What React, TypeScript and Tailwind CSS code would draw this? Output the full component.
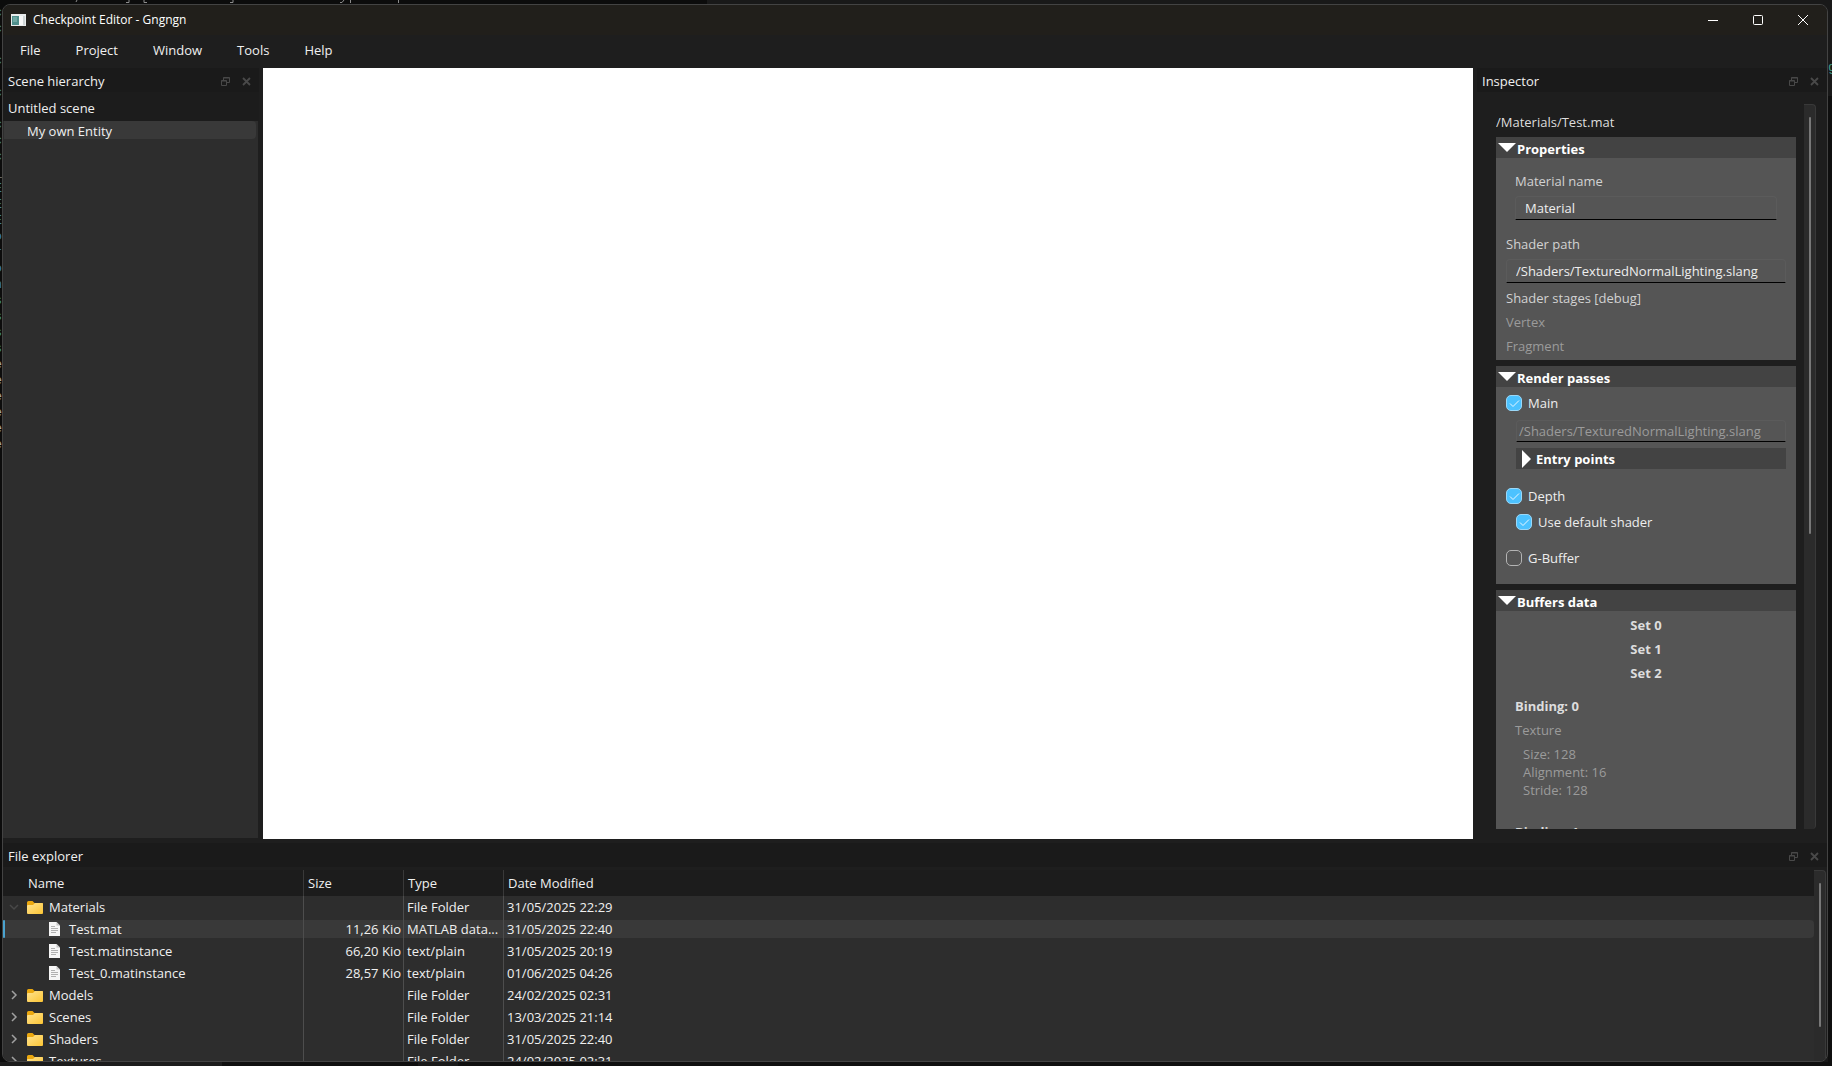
import React from "react";

const gutter = [
  { c: "text-[#3f7f95]", t: "c" },
  { c: "text-[#3f7f95]", t: "c" },
  { c: "", t: "" },
  { c: "text-[#3f7f95]", t: "c" },
  { c: "", t: "" },
  { c: "text-[#3f7f95]", t: "c" },
  { c: "", t: "" },
  { c: "text-[#3f7f95]", t: "c" },
  { c: "text-[#3f7f95]", t: "c" },
  { c: "text-[#3f7f95]", t: "c" },
  { c: "text-[#a9a9a9]", t: "_" },
  { c: "text-[#3f7f95]", t: "E" },
  { c: "text-[#3f7f95]", t: "E" },
  { c: "text-[#3f7f95]", t: "E" },
  { c: "text-[#3a78b5]", t: "o" },
  { c: "text-[#3a78b5]", t: "r" },
  { c: "text-[#3a78b5]", t: "o" },
  { c: "text-[#3a78b5]", t: "n" },
  { c: "text-[#3c8f8f]", t: "s" },
  { c: "text-[#3c8f8f]", t: "s" },
  { c: "text-[#3c8f8f]", t: "s" },
  { c: "text-[#3c8f8f]", t: "s" },
  { c: "text-[#a9a9a9]", t: "e" },
  { c: "text-[#a9a9a9]", t: "e" },
  { c: "text-[#a9a9a9]", t: "e" },
  { c: "text-[#a9a9a9]", t: "e" },
  { c: "text-[#a9a9a9]", t: "e" },
  { c: "text-[#a9a9a9]", t: "e" },
];

/* Slivers of the code editor that stays open underneath the window. */
function Backdrop() {
  return (
    <div aria-hidden="true" className="pointer-events-none absolute inset-0 overflow-hidden font-['Liberation_Mono',monospace] text-[13px] leading-4">
      <div className="absolute top-0 left-0 h-1 w-full">
        <svg width="420" height="4" viewBox="0 0 420 4" fill="none" stroke="#8c8c8c">
          <path d="M77 0l-1 2M126 2.500h3V0M144 0v2.500h3M230 2.500h3V0M340 2.500h2l2-2.500M350.500 0v3M398.500 0v3" />
        </svg>
      </div>
      <div className="absolute top-0 right-0 h-full w-[1125px] bg-[#191919]" />
      <div className="absolute top-[5px] left-0 w-[2px]">
        {gutter.map((g, i) => (
          <div key={i} className="flex h-4 w-[2px] justify-end overflow-hidden">
            <span className={g.c}>{g.t}</span>
          </div>
        ))}
      </div>
      <div className="absolute top-[60px] right-0 w-1 overflow-hidden text-[#3f9a86]">g</div>
      <div className="absolute right-0 bottom-0 left-0 flex h-1 bg-[#0f0f0f]">
        <div className="w-[222px] bg-[#1c1c1c]" />
        <div className="w-[196px]" />
        <div className="w-10 bg-[#191919]" />
      </div>
      <div className="absolute top-24 right-0 bottom-0 w-1 bg-[#0f0f0f]" />
    </div>
  );
}

function AppIcon() {
  return (
    <svg width="15" height="12" viewBox="0 0 15 12" aria-hidden="true">
      <rect width="15" height="12" fill="#e8ecec" />
      <rect x="1" y="2" width="7" height="9" fill="#4f8f8c" />
      <rect x="2" y="3" width="4" height="5" fill="#6fa9a3" />
      <rect x="8" y="2" width="4" height="9" fill="#f7f8f8" />
      <rect x="12" y="2" width="2" height="9" fill="#cfd6d6" />
    </svg>
  );
}

function DockTitle({ id, title }: { id: string; title: string }) {
  return (
    <div className="flex h-6 shrink-0 items-center gap-3 bg-[#1a1a1a] pt-[2px] pr-2 pl-[5px]">
      <h2 id={id} className="flex-1">{title}</h2>
      <button type="button" aria-label={"Float " + title} className="flex size-[9px] items-center justify-center">
        <svg width="9" height="9" viewBox="0 0 9 9" fill="none" stroke="#494949" aria-hidden="true">
          <path d="M0.5 3.5h5v5h-5zM0.5 4h5M2.5 3V0.5h6v5H6M2.5 1h6" />
        </svg>
      </button>
      <button type="button" aria-label={"Close " + title} className="flex size-[9px] items-center justify-center">
        <svg width="9" height="9" viewBox="0 0 9 9" fill="none" stroke="#494949" strokeWidth="1.8" aria-hidden="true">
          <path d="M1 1l7 7M8 1l-7 7" />
        </svg>
      </button>
    </div>
  );
}

function Section({ title, className, children }: { title: string; className: string; children: React.ReactNode }) {
  return (
    <section className="shrink-0 bg-[#555555]">
      <button type="button" aria-expanded="true" className="flex h-[21px] w-full items-center gap-px bg-[#434343] pl-[2px] font-bold text-white">
        <svg width="18" height="9" viewBox="0 0 18 9" fill="#fff" aria-hidden="true">
          <path d="M0 0h18L9 9z" />
        </svg>
        <span className="pt-[2px]">{title}</span>
      </button>
      <div className={className}>{children}</div>
    </section>
  );
}

function Check({ label, checked }: { label: string; checked?: boolean }) {
  return (
    <label className="flex h-[18px] w-fit items-center gap-[6px] text-[#eeeeee]">
      <span className="grid size-4">
        <input
          type="checkbox"
          defaultChecked={checked}
          className="peer col-start-1 row-start-1 size-4 appearance-none rounded-[5px] border border-[#b4b4b4] checked:border-[#9bd8f8] checked:bg-[#4cc2ff]"
        />
        <svg viewBox="0 0 16 16" fill="none" stroke="#e8f7ff" className="pointer-events-none invisible col-start-1 row-start-1 size-4 peer-checked:visible" aria-hidden="true">
          <path d="M4 8.5l3 3 6-6" />
        </svg>
      </span>
      {label}
    </label>
  );
}

function Folder() {
  return (
    <svg width="16" height="13" viewBox="0 0 16 13" className="shrink-0" aria-hidden="true">
      <defs>
        <linearGradient id="folder" x1="0" y1="0" x2="1" y2="1">
          <stop offset="0" stopColor="#ffe391" />
          <stop offset="1" stopColor="#fcc534" />
        </linearGradient>
      </defs>
      <path d="M0 1.5Q0 0 1.500 0h4l2 2H15q1 0 1 1v4H0z" fill="#eba80f" />
      <path d="M0 5q0-1 1-1h5l2-2h7q1 0 1 1V12q0 1-1 1H1q-1 0-1-1z" fill="url(#folder)" />
    </svg>
  );
}

function Page() {
  return (
    <svg width="11" height="14" viewBox="0 0 11 14" className="shrink-0" aria-hidden="true">
      <path d="M0 0h7.500L11 3.500V14H0z" fill="#f5f5f5" />
      <path d="M7.500 0v3.500H11z" fill="#c4c4c4" />
      <path d="M2 4.500h4M2 6.500h7M2 8.500h7M2 10.500h5" stroke="#b0b0b0" />
    </svg>
  );
}

type Row = { name: string; kind: "open" | "folder" | "file"; size?: string; type: string; date: string };

const rows: Row[] = [
  { name: "Materials", kind: "open", type: "File Folder", date: "31/05/2025 22:29" },
  { name: "Test.mat", kind: "file", size: "11,26 Kio", type: "MATLAB data...", date: "31/05/2025 22:40" },
  { name: "Test.matinstance", kind: "file", size: "66,20 Kio", type: "text/plain", date: "31/05/2025 20:19" },
  { name: "Test_0.matinstance", kind: "file", size: "28,57 Kio", type: "text/plain", date: "01/06/2025 04:26" },
  { name: "Models", kind: "folder", type: "File Folder", date: "24/02/2025 02:31" },
  { name: "Scenes", kind: "folder", type: "File Folder", date: "13/03/2025 21:14" },
  { name: "Shaders", kind: "folder", type: "File Folder", date: "31/05/2025 22:40" },
  { name: "Textures", kind: "folder", type: "File Folder", date: "24/02/2025 02:31" },
];

function FileRow({ row, selected }: { row: Row; selected: boolean }) {
  const bg = selected ? "bg-[#393939]" : "";
  return (
    <tr className="h-[22px]" aria-selected={selected}>
      <td className="border-r border-[#4d4d4d] p-0">
        <div className={"flex h-[18px] items-center " + bg}>
          <span className={selected ? "h-[18px] w-[2px] rounded bg-[#4aa3cf]" : "w-[2px]"} />
          {row.kind === "file" ? (
            <span className="flex items-center gap-[9px] pl-11"><Page />{row.name}</span>
          ) : (
            <span className="flex items-center gap-[6px] pl-[3px]">
              <svg width="12" height="12" viewBox="0 0 12 12" fill="none" strokeWidth="1.5" stroke={row.kind === "open" ? "#484848" : "#a0a0a0"} className="mr-px" aria-hidden="true">
                <path d={row.kind === "open" ? "M2 4l4 4 4-4" : "M4 2l4 4-4 4"} />
              </svg>
              <Folder />{row.name}
            </span>
          )}
        </div>
      </td>
      <td className="border-r border-[#4d4d4d] p-0 text-right"><div className={"h-[18px] pr-[2px] " + bg}>{row.size}</div></td>
      <td className="border-r border-[#4d4d4d] p-0"><div className={"h-[18px] pl-[3px] " + bg}>{row.type}</div></td>
      <td className="p-0"><div className={"h-[18px] rounded-r pl-[3px] " + bg}>{row.date}</div></td>
    </tr>
  );
}

export default function App() {
  return (
    <div className="relative isolate flex h-screen flex-col overflow-hidden bg-[#0c0c0c] pt-1 pr-1 pb-1 pl-[2px] font-['Open_Sans',sans-serif] text-[13px] leading-[18px] text-[#f0f0f0]">
      <Backdrop />
      <div className="z-10 flex min-h-0 flex-1 flex-col overflow-hidden rounded-lg border border-[#434343] bg-[#1e1e1e]">
        <header className="flex h-[30px] shrink-0 items-center bg-[#211f1b] pr-px pb-px pl-2 text-[12px] text-white">
          <AppIcon />
          <h1 className="flex-1 pl-[7px]">Checkpoint Editor - Gngngn</h1>
          <button type="button" aria-label="Minimize" className="flex h-full w-[45px] items-center justify-center">
            <svg width="10" height="10" viewBox="0 0 10 10" stroke="#fff" aria-hidden="true"><path d="M0 5.500h10" /></svg>
          </button>
          <button type="button" aria-label="Maximize" className="flex h-full w-[45px] items-center justify-center">
            <svg width="10" height="10" viewBox="0 0 10 10" fill="none" stroke="#fff" aria-hidden="true"><rect x="0.5" y="0.5" width="9" height="9" rx="1" /></svg>
          </button>
          <button type="button" aria-label="Close" className="flex h-full w-[46px] items-center justify-center">
            <svg width="10" height="10" viewBox="0 0 10 10" stroke="#fff" aria-hidden="true"><path d="M0 0l10 10M10 0L0 10" /></svg>
          </button>
        </header>
        <nav className="flex h-[33px] shrink-0 items-center gap-[35px] pb-[3px] pl-[17px]">
          <button type="button">File</button>
          <button type="button">Project</button>
          <button type="button">Window</button>
          <button type="button">Tools</button>
          <button type="button">Help</button>
        </nav>

        <main className="flex min-h-0 flex-1 gap-1">
          <aside aria-labelledby="hierarchy" className="flex w-64 shrink-0 flex-col">
            <DockTitle id="hierarchy" title="Scene hierarchy" />
            <div className="flex h-[29px] shrink-0 items-center bg-[#1c1c1c] pt-[2px] pl-[5px]">Untitled scene</div>
            <ul className="mr-px flex-1 bg-[#2d2d2d] pr-[2px] pl-px">
              <li className="h-[18px] rounded-r bg-[#393939] pl-[23px]"><span className="block pt-px">My own Entity</span></li>
            </ul>
            <div className="h-px" />
          </aside>
          <div className="flex-1 bg-white" />
          <aside aria-labelledby="inspector" className="flex w-[350px] shrink-0 flex-col">
            <DockTitle id="inspector" title="Inspector" />
            <div className="mt-3 mr-[11px] mb-[10px] ml-[19px] flex min-h-0 flex-1 justify-between">
              <div className="flex w-[300px] flex-col gap-[6px] overflow-hidden">
                <p className="-mb-[2px] shrink-0 pt-[9px] pb-[2px] text-[#dddddd]">/Materials/Test.mat</p>
                <Section title="Properties" className="flex flex-col px-[10px] pt-[14px] pb-[5px] text-[#d2d2d2]">
                  <div className="flex flex-col gap-[6px] px-[9px]">
                    <label htmlFor="material">Material name</label>
                    <input id="material" defaultValue="Material" className="h-6 rounded-t border border-[#5b5b5b] border-b-black px-[9px] text-[#eeeeee]" />
                  </div>
                  <label htmlFor="shader" className="mt-[15px]">Shader path</label>
                  <input id="shader" defaultValue="/Shaders/TexturedNormalLighting.slang" className="mt-[6px] h-6 rounded-t border border-[#5b5b5b] border-b-black px-[9px] text-[#eeeeee]" />
                  <p className="mt-[6px]">Shader stages [debug]</p>
                  <p className="mt-[6px] text-[#9b9b9b]">Vertex</p>
                  <p className="mt-[6px] text-[#9b9b9b]">Fragment</p>
                </Section>
                <Section title="Render passes" className="flex flex-col px-[10px] pt-[7px] pb-[17px]">
                  <Check label="Main" checked />
                  <div className="mt-2 flex flex-col gap-[6px] pl-[10px]">
                    <input aria-label="Main pass shader" disabled defaultValue="/Shaders/TexturedNormalLighting.slang" className="h-[22px] rounded-t border border-[#5b5b5b] border-b-black px-[2px] text-[#9b9b9b]" />
                    <button type="button" aria-expanded="false" className="flex h-[21px] items-center gap-[5px] bg-[#434343] pl-[6px] font-bold text-white">
                      <svg width="9" height="18" viewBox="0 0 9 18" fill="#fff" aria-hidden="true"><path d="M0 0v18l9-9z" /></svg>
                      Entry points
                    </button>
                  </div>
                  <div className="mt-[18px]"><Check label="Depth" checked /></div>
                  <div className="mt-2 pl-[10px]"><Check label="Use default shader" checked /></div>
                  <div className="mt-[18px]"><Check label="G-Buffer" /></div>
                </Section>
                <Section title="Buffers data" className="px-[19px] pt-[5px] pb-3 text-[#9b9b9b]">
                  <div className="flex flex-col items-center gap-[6px] font-bold text-[#dddddd]">
                    <p>Set 0</p>
                    <p>Set 1</p>
                    <p>Set 2</p>
                  </div>
                  <h3 className="mt-[15px] font-bold text-[#dddddd]">Binding: 0</h3>
                  <p className="my-[6px]">Texture</p>
                  <div className="pl-2">
                    <p>Size: 128</p>
                    <p>Alignment: 16</p>
                    <p>Stride: 128</p>
                  </div>
                  <h3 className="mt-6 font-bold text-[#dddddd]">Binding: 1</h3>
                </Section>
              </div>
              <div className="flex w-3 justify-center rounded-r border-t border-r border-[#393939] bg-[#2b2b2b] pt-3">
                <div className="h-[417px] w-[2px] rounded bg-[#787878]" />
              </div>
            </div>
          </aside>
        </main>

        <section aria-labelledby="explorer" className="flex h-[222px] shrink-0 flex-col pt-1">
          <DockTitle id="explorer" title="File explorer" />
          <div className="mt-[3px] flex min-h-0 flex-1">
            <div className="flex-1 overflow-hidden bg-[#2d2d2d]">
              <table className="w-full table-fixed border-separate border-spacing-0 bg-[#2d2d2d]">
                <colgroup>
                  <col className="w-[301px]" />
                  <col className="w-[100px]" />
                  <col className="w-[100px]" />
                  <col />
                </colgroup>
                <thead>
                  <tr className="h-[26px] bg-[#1c1c1c] text-left">
                    <th className="border-r border-[#393939] p-0 pl-[25px] font-normal">Name</th>
                    <th className="border-r border-[#393939] p-0 pl-1 font-normal">Size</th>
                    <th className="border-r border-[#393939] p-0 pl-1 font-normal">Type</th>
                    <th className="p-0 pl-1 font-normal">Date Modified</th>
                  </tr>
                </thead>
                <tbody>
                  {rows.map((r, i) => <FileRow key={r.name} row={r} selected={i === 1} />)}
                </tbody>
              </table>
            </div>
            <div className="mr-px flex w-3 justify-center rounded-tr border-t border-r border-[#393939] bg-[#2b2b2b] pt-3">
              <div className="h-36 w-[2px] rounded bg-[#787878]" />
            </div>
          </div>
        </section>
      </div>
    </div>
  );
}
